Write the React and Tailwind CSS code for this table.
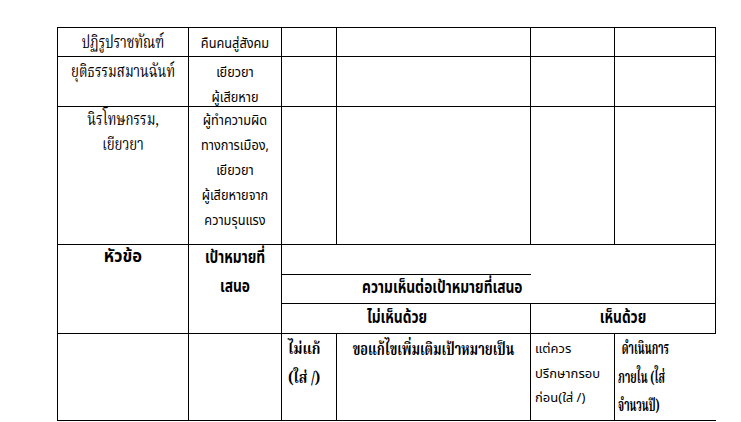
import React from "react";

const serif = "font-['Noto_Serif_Thai',serif]";
const sans = "font-['Noto_Sans_Thai',sans-serif]";
const cell = "border border-black align-top p-0";
const mid = "flex flex-col items-center whitespace-nowrap";

export default function App() {
  return (
    <div className="min-h-[422px] bg-white text-black overflow-hidden">
      <table className="ml-[57px] mt-[27px] border-collapse table-fixed w-[658px]">
        <colgroup>
          <col className="w-[131px]" />
          <col className="w-[93px]" />
          <col className="w-[55px]" />
          <col className="w-[194px]" />
          <col className="w-[84px]" />
          <col className="w-[101px]" />
        </colgroup>
        <tbody>
          {/* แถวข้อมูล */}
          <tr>
            <td className={`${cell} h-[29px] pt-[3px] text-[17px] leading-[25px] ${serif}`}>
              <div className={`${mid} scale-x-[0.78]`}>ปฏิรูปราชทัณฑ์</div>
            </td>
            <td className={`${cell} pt-[3px] text-[14px] leading-[25px] ${sans}`}>
              <div className={`${mid} scale-x-[0.91]`}>คืนคนสู่สังคม</div>
            </td>
            <td className={cell}></td>
            <td className={cell}></td>
            <td className={cell}></td>
            <td className={cell}></td>
          </tr>
          <tr>
            <td className={`${cell} h-[50px] pt-[3px] text-[17px] leading-[25px] ${serif}`}>
              <div className={`${mid} scale-x-[0.78]`}>ยุติธรรมสมานฉันท์</div>
            </td>
            <td className={`${cell} pt-[3px] text-[14px] leading-[25px] ${sans}`}>
              <div className={`${mid} scale-x-[0.91] h-[44px]`}>
                <div>เยียวยา</div>
                <div>ผู้เสียหาย</div>
              </div>
            </td>
            <td className={cell}></td>
            <td className={cell}></td>
            <td className={cell}></td>
            <td className={cell}></td>
          </tr>
          <tr>
            <td className={`${cell} h-[138px] pt-[1px] text-[17px] leading-[25px] ${serif}`}>
              <div className={`${mid} scale-x-[0.78]`}>
                <div>นิรโทษกรรม,</div>
                <div>เยียวยา</div>
              </div>
            </td>
            <td className={`${cell} pt-[1px] text-[14px] leading-[25px] ${sans}`}>
              <div className={`${mid} scale-x-[0.91]`}>
                <div>ผู้ทำความผิด</div>
                <div>ทางการเมือง,</div>
                <div>เยียวยา</div>
                <div>ผู้เสียหายจาก</div>
                <div>ความรุนแรง</div>
              </div>
            </td>
            <td className={cell}></td>
            <td className={cell}></td>
            <td className={cell}></td>
            <td className={cell}></td>
          </tr>

          {/* หัวตาราง */}
          <tr>
            <td rowSpan={3} className={`${cell} font-bold text-[17px] leading-[24px] ${sans}`}>
              <div className={`${mid} scale-x-[0.97]`}>หัวข้อ</div>
            </td>
            <td rowSpan={3} className={`${cell} font-bold text-[17px] leading-[29px] ${sans}`}>
              <div className={`${mid} scale-x-[0.81] -mt-[1px]`}>
                <div>เป้าหมายที่</div>
                <div>เสนอ</div>
              </div>
            </td>
            <td colSpan={2} className={`${cell} h-[30px] border-r-0`}></td>
            <td colSpan={2} rowSpan={2} className={`${cell} border-l-0`}></td>
          </tr>
          <tr>
            <td colSpan={2} className={`${cell} h-[29px] border-r-0 text-right pr-[8px] font-bold text-[17px] leading-[26px] ${sans}`}>
              <div className="scale-x-[0.81] origin-right whitespace-nowrap">ความเห็นต่อเป้าหมายที่เสนอ</div>
            </td>
          </tr>
          <tr>
            <td colSpan={2} className={`${cell} h-[30px] pr-[18px] font-bold text-[17px] leading-[28px] ${sans}`}>
              <div className={`${mid} scale-x-[0.81]`}>ไม่เห็นด้วย</div>
            </td>
            <td colSpan={2} className={`${cell} font-bold text-[17px] leading-[28px] ${sans}`}>
              <div className={`${mid} scale-x-[0.81]`}>เห็นด้วย</div>
            </td>
          </tr>

          {/* แถวตัวเลือก */}
          <tr>
            <td className={`${cell} h-[87px]`}></td>
            <td className={cell}></td>
            <td className={`${cell} pt-[2px] pl-[6px] font-bold text-[16px] leading-[29px] ${serif}`}>
              <div className="scale-x-[0.86] origin-left whitespace-nowrap h-[80px]">
                <div>ไม่แก้</div>
                <div>(ใส่ /)</div>
              </div>
            </td>
            <td className={`${cell} pt-[2px] font-bold text-[17px] leading-[29px] ${serif}`}>
              <div className={`${mid} scale-x-[0.75]`}>ขอแก้ไขเพิ่มเติมเป้าหมายเป็น</div>
            </td>
            <td className={`${cell} pt-[3px] pl-[4px] text-[13px] leading-[24.5px] ${sans}`}>
              <div className="whitespace-nowrap">
                <div>แต่ควร</div>
                <div>ปรึกษากรอบ</div>
                <div>ก่อน(ใส่ /)</div>
              </div>
            </td>
            <td className={`${cell} border-r-0 pt-[2px] pl-[3px] font-bold text-[17px] leading-[28.5px] ${serif}`}>
              <div className="scale-x-[0.61] origin-left whitespace-nowrap h-[80px]">
                <div className="pl-[6px]">ดำเนินการ</div>
                <div>ภายใน (ใส่</div>
                <div>จำนวนปี)</div>
              </div>
            </td>
          </tr>
        </tbody>
      </table>
    </div>
  );
}
